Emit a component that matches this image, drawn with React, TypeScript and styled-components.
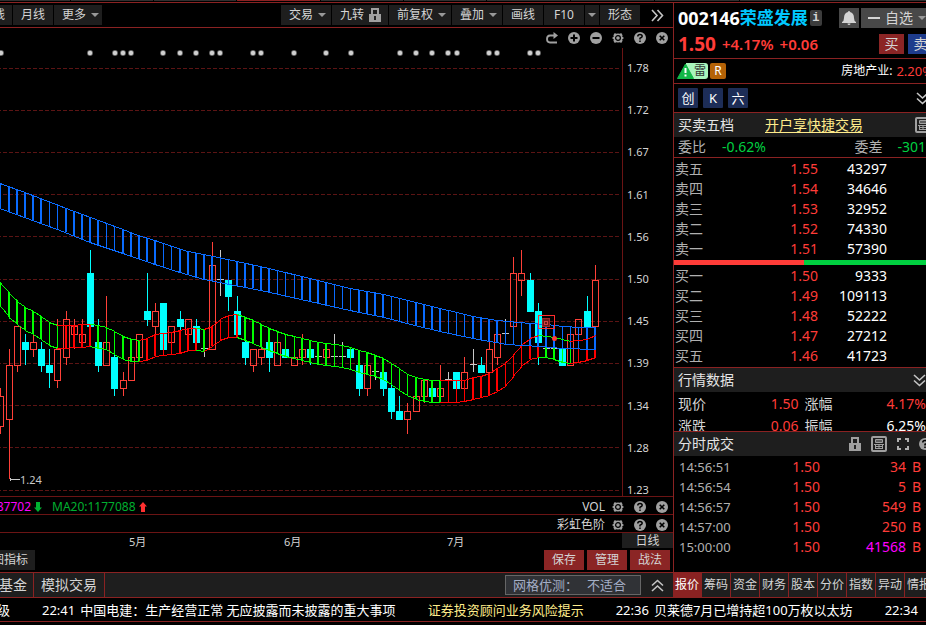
import React from 'react';
import styled, { createGlobalStyle } from 'styled-components';

const c = {
  line: '#8a2222',
  dim: '#6b1414',
  bar: '#1e1e1e',
  text: '#d4d4d4',
  soft: '#b0b0b0',
  up: '#ff3c38',
  down: '#00d040',
  magenta: '#ff00ff',
  link: '#ffec8b',
};

const GlobalStyle = createGlobalStyle`
  * { box-sizing: border-box; }
  body {
    margin: 0;
    background: #000;
    color: ${c.text};
    font-family: "Noto Sans", "Noto Sans CJK SC", sans-serif;
    font-size: 14px;
    line-height: 20px;
    overflow: hidden;
  }
  button { font: inherit; color: inherit; border: 0; padding: 0; background: none; white-space: nowrap; }
  a { color: inherit; text-decoration: none; }
  svg { display: block; flex: none; }
`;

const Page = styled.div`
  min-height: 100vh;
  display: flex;
  flex-direction: column;
  overflow: hidden;
`;

const TopStrip = styled.div`
  display: flex;
  gap: 1px;
  height: 3px;
  padding-bottom: 1px;
  overflow: hidden;
  border-bottom: 1px solid ${c.line};
`;
const StripTab = styled.div<{ $w: number; $active?: boolean }>`
  flex: 0 0 ${p => p.$w}px;
  background: ${p => (p.$active ? c.line : '#303030')};
`;

const Main = styled.div`
  display: flex;
`;
const ChartSide = styled.main`
  flex: 1;
  min-width: 0;
  display: flex;
  flex-direction: column;
`;

const Toolbar = styled.div`
  display: flex;
  gap: 1px;
  align-items: center;
  height: 25px;
  border-bottom: 1px solid ${c.line};
  font-size: 12px;
`;
const Tool = styled.button<{ $w: number; $cut?: boolean; $menu?: boolean }>`
  display: flex;
  align-items: center;
  justify-content: ${p => (p.$cut ? 'flex-end' : p.$menu ? 'flex-start' : 'center')};
  gap: 5px;
  flex: none;
  width: ${p => p.$w}px;
  height: 20px;
  padding-left: ${p => (p.$menu ? 8 : 0)}px;
  padding-right: ${p => (p.$cut ? 7 : 0)}px;
  background: ${c.bar};
  overflow: hidden;
`;
const Spacer = styled.div`
  flex: 1;
`;
const IconButton = styled.button<{ $w?: number }>`
  display: flex;
  align-items: center;
  justify-content: center;
  flex: none;
  width: ${p => p.$w ?? 22}px;
  height: 18px;
`;

const ChartTools = styled.div`
  display: flex;
  justify-content: flex-end;
  align-items: center;
  height: 20px;
`;
const PlotRow = styled.div`
  display: flex;
  border-bottom: 1px solid ${c.dim};
`;
const Plot = styled.svg`
  flex: 1;
  min-width: 0;
  height: 448px;
`;
const PriceAxis = styled.div`
  display: flex;
  flex-direction: column;
  justify-content: space-between;
  flex: 0 0 51px;
  padding: 14px 0 0 4px;
  border-left: 1px solid ${c.dim};
  font-size: 11px;
  line-height: 12px;
`;

const StudyRow = styled.div`
  display: flex;
  align-items: center;
  height: 18px;
  padding-top: 2px;
  border-bottom: 1px solid ${c.dim};
  font-size: 12px;
  line-height: 16px;
`;
const StudyName = styled.span`
  margin-right: 2px;
`;
const StudyValue = styled.span<{ $color: string; $w?: number }>`
  display: flex;
  justify-content: flex-end;
  align-items: center;
  gap: 3px;
  width: ${p => (p.$w ? p.$w + 'px' : 'auto')};
  color: ${p => p.$color};
  margin-right: 10px;
  overflow: hidden;
`;

const MonthRow = styled.div`
  display: flex;
  height: 17px;
  padding-left: 129px;
  font-size: 11px;
  line-height: 18px;
`;
const Month = styled.span<{ $w: number }>`
  flex: 0 0 ${p => p.$w}px;
`;
const Period = styled.button`
  width: 51px;
  height: 15px;
  background: ${c.bar};
  font-size: 12px;
  line-height: 15px;
`;
const ActionRow = styled.div`
  display: flex;
  gap: 3px;
  height: 22px;
  padding-right: 3px;
  font-size: 12px;
`;
const Action = styled.button`
  width: 40px;
  height: 20px;
  background: #8b2525;
`;

const Side = styled.aside`
  flex: 0 0 253px;
  border-left: 1px solid ${c.line};
  overflow: hidden;
  white-space: nowrap;
`;
const SideBody = styled.div`
  width: 260px;
`;
const SideRow = styled.div<{ $h: number; $line?: boolean; $gap?: number; $below?: number }>`
  display: flex;
  align-items: center;
  gap: ${p => p.$gap ?? 0}px;
  height: ${p => p.$h}px;
  padding: 0 1px ${p => p.$below ?? 0}px 4px;
  border-bottom: ${p => (p.$line ? `1px solid ${c.line}` : '0')};
`;
const Code = styled.span`
  color: #fff;
  font-size: 18px;
  font-weight: 700;
`;
const StockName = styled.h1`
  margin: 0;
  color: #00c8ff;
  font-size: 17px;
  font-weight: 700;
  line-height: 20px;
`;
const Info = styled.span`
  width: 12px;
  height: 16px;
  margin-left: 2px;
  background: #3c3c3c;
  border-radius: 2px;
  font: 700 12px/16px "Liberation Mono", monospace;
  text-align: center;
`;
const GreyButton = styled.button<{ $w: number }>`
  display: flex;
  align-items: center;
  justify-content: center;
  gap: 5px;
  flex: none;
  width: ${p => p.$w}px;
  height: 20px;
  margin-left: 2px;
  background: #484848;
`;
const Price = styled.strong`
  font-size: 19px;
  color: ${c.up};
`;
const Delta = styled.span`
  font-size: 15px;
  font-weight: 600;
  margin-left: 6px;
  color: ${c.up};
`;
const Trade = styled.button<{ $bg: string }>`
  width: 25px;
  height: 20px;
  margin-left: 4px;
  background: ${p => p.$bg};
`;
const Alert = styled.span`
  display: flex;
  align-items: center;
  margin-left: -1px;
  height: 16px;
  padding-right: 2px;
  border-radius: 3px;
  background: linear-gradient(90deg, transparent 0 9px, #a8f5bc 9px);
  color: #333;
  font-size: 12px;
  line-height: 16px;
`;
const Margin = styled.span`
  width: 16px;
  height: 16px;
  border-radius: 2px;
  background: #b46206;
  color: #fff;
  font-size: 12px;
  line-height: 16px;
  text-align: center;
`;
const Sector = styled.span`
  font-size: 12px;
  color: #fff;
`;
const Square = styled.button`
  width: 20px;
  height: 20px;
  background: #1d2d57;
  color: #fff;
  border-radius: 1px;
  font-size: 13px;
`;
const SectionHead = styled.div`
  display: flex;
  align-items: center;
  height: 24px;
  padding-left: 4px;
  background: ${c.bar};
  color: #e4e4e4;
`;
const QuickLink = styled.a`
  margin-left: 31px;
  color: ${c.link};
  text-decoration: underline;
  text-underline-offset: 2px;
`;
const Tinted = styled.span<{ $color: string; $size?: number; $left?: number }>`
  margin-left: ${p => p.$left ?? 0}px;
  color: ${p => p.$color};
  font-size: ${p => p.$size ?? 14}px;
`;
const DataTable = styled.table`
  table-layout: fixed;
  width: 252px;
  border-collapse: collapse;
`;
const Cell = styled.td<{ $color?: string; $h?: number; $left?: boolean }>`
  height: ${p => p.$h ?? 20}px;
  padding: 0 0 0 ${p => (p.$left ? 6 : 0)}px;
  color: ${p => p.$color ?? '#fff'};
  text-align: ${p => (p.$left ? 'left' : 'right')};
`;
const RowHead = styled.th<{ $pad: number; $color?: string; $size?: number }>`
  padding: 0 0 0 ${p => p.$pad}px;
  color: ${p => p.$color ?? c.soft};
  font-size: ${p => p.$size ?? 14}px;
  font-weight: 400;
  text-align: left;
`;
const Balance = styled.div`
  display: grid;
  grid-template-columns: 130px 1fr;
  height: 5px;
  margin: 1px 0;
`;
const Share = styled.div<{ $color: string }>`
  background: ${p => p.$color};
`;
const Book = styled.div`
  padding: 1px 0;
  border-bottom: 1px solid ${c.line};
`;
const Quotes = styled.div`
  height: 40px;
  padding-top: 1px;
  overflow: hidden;
  border-bottom: 1px solid ${c.line};
`;
const Trades = styled.div`
  padding-top: 1px;
`;

const BottomBar = styled.nav`
  display: flex;
  align-items: center;
  height: 26px;
  border: solid ${c.line};
  border-width: 1px 0;
  background: ${c.bar};
  overflow: hidden;
`;
const BottomTab = styled.button<{ $w: number; $cut?: boolean }>`
  display: flex;
  align-items: center;
  justify-content: ${p => (p.$cut ? 'flex-end' : 'center')};
  flex: none;
  width: ${p => p.$w}px;
  height: 24px;
  padding-right: ${p => (p.$cut ? 6 : 0)}px;
  border-right: 1px solid ${c.line};
  overflow: hidden;
`;
const GridTest = styled.button`
  display: flex;
  gap: 9px;
  width: 136px;
  height: 20px;
  padding-left: 7px;
  border: 1px solid #666;
  background: #303236;
  color: #a4aec6;
  font-size: 13px;
  line-height: 18px;
`;
const InfoTabs = styled.div`
  display: flex;
  flex: 0 0 253px;
  overflow: hidden;
`;
const InfoTab = styled.button<{ $active?: boolean }>`
  flex: 0 0 29px;
  height: 24px;
  border-right: 1px solid ${c.line};
  background: ${p => (p.$active ? c.line : c.bar)};
  color: ${p => (p.$active ? '#fff' : c.text)};
  font-size: 12px;
`;
const Ticker = styled.div`
  display: flex;
  align-items: center;
  gap: 32px;
  height: 24px;
  overflow: hidden;
  border-bottom: 1px solid ${c.line};
  color: #fff;
  font-size: 13px;
  white-space: nowrap;
`;
const News = styled.a<{ $color?: string; $w?: number }>`
  display: flex;
  justify-content: flex-end;
  gap: 5px;
  flex: none;
  width: ${p => (p.$w ? p.$w + 'px' : 'auto')};
  color: ${p => p.$color ?? '#fff'};
`;

const Caret = () => (
  <svg width="8" height="4"><path d="M0 0h8L4 4z" fill="#999" /></svg>
);
const Lock = () => (
  <svg width="12" height="14" viewBox="0 0 12 14">
    <path d="M3 6V1h6v5" fill="none" stroke="#a0a0a0" strokeWidth="2" />
    <path d="M0 6h12v8H0z" fill="#a0a0a0" />
    <path d="M5 8h2v4H5z" fill="#222" />
  </svg>
);
const Chevrons = ({ turn }: { turn: number }) => (
  <svg width="13" height="13" viewBox="0 0 13 13" fill="none" stroke="#c4c4c4" strokeWidth="1.600">
    <path transform={`rotate(${turn} 6.5 6.5)`} d="M1 1l5 5.500-5 5.500M6.500 1l5 5.500-5 5.500" />
  </svg>
);
const Redo = () => (
  <svg width="13" height="12" viewBox="0 0 13 12" fill="none" stroke="#a0a0a0" strokeWidth="1.800">
    <path d="M9 3.500H4Q1 3.500 1 7t3 3.500h7" /><path d="M7.500 0l4.500 3.500L7.500 7z" fill="#a0a0a0" stroke="none" />
  </svg>
);
const Round = ({ kind }: { kind: 'plus' | 'minus' | 'help' | 'close' }) => (
  <svg width="12" height="12" viewBox="0 0 12 12" fill="none" stroke="#000" strokeWidth="2">
    <circle cx="6" cy="6" r="6" fill="#a0a0a0" stroke="none" />
    {kind === 'plus' && <path d="M6 2.500v7M2.500 6h7" />}
    {kind === 'minus' && <path d="M2.500 6h7" />}
    {kind === 'close' && <path d="M3.700 3.700l4.600 4.600M8.300 3.700L3.700 8.300" strokeWidth="1.600" />}
    {kind === 'help' && <path d="M3.800 4.500q0-2 2.200-2t2.200 1.800Q8.200 5.500 6 6.200v1.300M6 8.400V10" strokeWidth="1.500" />}
  </svg>
);
const Gear = () => (
  <svg width="12" height="12" viewBox="0 0 13 12">
    <path d="M4.500 1.500L3 .5 1.500 3 2 4.500 0 6l2 1.500L1.500 9 3 11.500l1.500-1 2 .5 2-.5 1.500 1L11.500 9 11 7.500 13 6l-2-1.500.5-1.500L10 .5l-1.500 1-2-.5z" fill="#a0a0a0" />
    <circle cx="6.500" cy="6" r="2.600" fill="#a0a0a0" stroke="#000" strokeWidth="1.300" />
  </svg>
);
const Bell = () => (
  <svg width="14" height="14" viewBox="0 0 14 14" fill="#d4d4d4">
    <path d="M7 0q1 0 1 1 4 1 4 6 0 3 2 4v1H0v-1q2-1 2-4 0-5 4-6 0-1 1-1zM5.500 12.500h3q0 1.500-1.500 1.500t-1.500-1.500z" />
  </svg>
);
const Sheet = () => (
  <svg width="16" height="16" viewBox="0 0 16 16" fill="none" stroke="#a0a0a0">
    <rect x="1" y="1" width="14" height="14" rx="1" strokeWidth="2" />
    <path d="M4.500 3.500h7v3h-7zM4.500 5h7M3 8.500h10M4.500 10.500h7M4.500 12.500h7M8 8v5M4.500 8v5M11.500 8v5" />
  </svg>
);
const Expand = () => (
  <svg width="12" height="12" viewBox="0 0 12 12" fill="none" stroke="#b0b0b0" strokeWidth="2">
    <path d="M1 4V1h3M8 1h3v3M11 8v3H8M4 11H1V8" />
  </svg>
);
const Arrow = ({ up }: { up?: boolean }) => (
  <svg width="8" height="10" viewBox="0 0 8 10">
    <path d="M4 0l4 4.500H6V10H2V4.500H0z" fill={up ? '#ff3030' : '#00b030'} transform={up ? undefined : 'rotate(180 4 5)'} />
  </svg>
);
const Warning = () => (
  <svg width="17" height="16" viewBox="0 0 17 16">
    <path d="M8.500 1L16.500 15.500H.500z" fill="#12b848" stroke="#12b848" strokeLinejoin="round" />
    <path d="M8.500 5v5M8.500 11.500v2" stroke="#fff" strokeWidth="2" />
  </svg>
);

type Kind = 'u' | 'd' | 'n';
/* kind, high, body top, body bottom, low */
const candles: [Kind, number, number, number, number][] = [
  ['u', 388, 396, 427, 434], ['u', 349, 365, 420, 479], ['u', 326, 326, 366, 372], ['d', 334, 342, 350, 365],
  ['u', 334, 342, 350, 357], ['d', 342, 349, 366, 372], ['d', 349, 365, 373, 388], ['u', 319, 349, 381, 388],
  ['u', 311, 319, 358, 365], ['u', 319, 326, 335, 349], ['u', 319, 334, 343, 347], ['d', 250, 273, 327, 327],
  ['d', 319, 342, 366, 372], ['u', 296, 342, 366, 366], ['d', 349, 357, 389, 396], ['u', 372, 380, 389, 396],
  ['u', 357, 357, 381, 381], ['u', 334, 334, 358, 358], ['d', 273, 311, 320, 326], ['u', 303, 311, 327, 334],
  ['d', 303, 303, 350, 356], ['u', 326, 326, 343, 349], ['d', 311, 319, 327, 330], ['u', 319, 319, 335, 335],
  ['d', 319, 326, 343, 343], ['n', 340, 348, 349, 357], ['u', 242, 265, 350, 350], ['n', 250, 279, 280, 296],
  ['d', 265, 280, 297, 311], ['d', 296, 311, 335, 335], ['d', 327, 342, 358, 365], ['u', 349, 349, 366, 372],
  ['u', 347, 349, 358, 365], ['d', 342, 342, 358, 372], ['u', 342, 342, 366, 366], ['d', 342, 349, 358, 358],
  ['u', 349, 357, 366, 366], ['u', 334, 349, 358, 365], ['d', 349, 349, 358, 365], ['n', 356, 356, 357, 357],
  ['u', 349, 349, 358, 358], ['n', 334, 356, 357, 357], ['n', 342, 356, 357, 357], ['d', 349, 349, 358, 365],
  ['d', 365, 365, 389, 396], ['u', 365, 365, 389, 396], ['n', 371, 371, 372, 380], ['d', 372, 372, 389, 396],
  ['d', 384, 388, 412, 419], ['d', 396, 411, 420, 420], ['u', 403, 411, 420, 434], ['u', 396, 396, 412, 412],
  ['u', 380, 380, 397, 403], ['d', 388, 388, 397, 397], ['u', 365, 388, 397, 397], ['n', 372, 379, 380, 380],
  ['d', 372, 372, 389, 396], ['u', 357, 372, 389, 396], ['n', 349, 364, 365, 372], ['d', 357, 365, 373, 373],
  ['u', 342, 349, 373, 373], ['u', 334, 334, 358, 365], ['n', 319, 333, 334, 334], ['u', 257, 273, 327, 327],
  ['u', 250, 273, 281, 296], ['d', 273, 280, 312, 312], ['d', 303, 311, 343, 365], ['n', 348, 348, 349, 349],
  ['n', 348, 348, 349, 349], ['d', 349, 349, 366, 366], ['u', 334, 334, 366, 366], ['u', 319, 319, 335, 335],
  ['d', 296, 311, 327, 327], ['u', 265, 280, 327, 327],
];
const fastTop = [
  282, 293, 301, 307, 311, 316, 322, 325, 325, 325, 324, 324, 325, 327, 331, 336, 339, 340, 338, 334, 333, 332, 330, 328, 328,
  329, 326, 319, 315, 314, 317, 320, 324, 328, 331, 334, 336, 338, 340, 342, 343, 344, 345, 347, 350, 352, 355, 358, 363, 368,
  374, 377, 379, 380, 380, 380, 380, 380, 377, 376, 373, 368, 363, 355, 345, 338, 335, 336, 337, 339, 341, 340, 339, 335,
];
const fastBottom = [
  305, 317, 324, 330, 334, 339, 345, 348, 348, 347, 347, 346, 348, 349, 354, 359, 361, 361, 360, 356, 355, 354, 353, 350, 350,
  351, 346, 340, 337, 337, 340, 343, 347, 350, 353, 356, 358, 360, 362, 364, 365, 366, 367, 369, 372, 374, 376, 379, 384, 390,
  395, 399, 401, 402, 402, 402, 402, 401, 399, 397, 395, 391, 386, 376, 366, 359, 357, 357, 359, 362, 363, 362, 360, 357,
];
const slowTop: [number, number][] = [
  [0, 183], [25, 192], [69, 209], [123, 229], [138, 235], [155, 240], [172, 246], [188, 251], [204, 254], [237, 261], [269, 268],
  [310, 278], [350, 288], [384, 294], [408, 300], [440, 308], [457, 312], [473, 316], [497, 320], [530, 323], [547, 324], [563, 326], [580, 327], [596, 327],
];
const slowBottom: [number, number][] = [
  [0, 208], [60, 230], [90, 242], [123, 253], [155, 264], [180, 272], [204, 279], [240, 286], [261, 290], [310, 301], [350, 310],
  [384, 317], [415, 325], [440, 331], [473, 338], [507, 344], [540, 346], [563, 348], [596, 349],
];
const gridY = [68, 110, 152, 194, 236, 279, 321, 363, 405, 447, 490];
const eventX = [1, 90, 115, 123, 131, 163, 180, 196, 212, 220, 253, 261, 294, 326, 351, 400, 416, 432, 448, 457, 489, 497, 530, 538];

const xAt = (n: number) => Math.floor(9.1 + 8.14 * (n - 1));
const isThin = (n: number) => {
  const i = n - 1;
  return i % 7 >= 5 || (i >= 35 && i % 7 === 0);
};
const isRising = (n: number) => {
  const i = n - 1;
  return (i >= 7 && i <= 10) || (i >= 17 && i <= 23) || (i >= 25 && i <= 28) || (i >= 54 && i <= 65) || i >= 70;
};
const interp = (pts: [number, number][], x: number) => {
  const k = Math.max(1, pts.findIndex(p => p[0] >= x));
  const [x0, y0] = pts[k - 1];
  const [x1, y1] = pts[k];
  return Math.round(y0 + ((y1 - y0) * (x - x0)) / (x1 - x0));
};
const path = (pts: [number, number][]) => 'M' + pts.map(p => p.join(' ')).join('L');
const colours = { u: '#ff4038', d: '#00ffff', n: '#c8c8c8' };

const Chart = () => (
  <Plot viewBox="0 48 622 448" preserveAspectRatio="xMaxYMin slice" role="img" aria-label="日线">
    <g shapeRendering="crispEdges">
      {gridY.map(y => (
        <path key={y} d={`M-3 ${y}.5H619`} stroke="#5c1414" strokeDasharray="4 2" />
      ))}
      {candles.map(([k, hi, top, bottom, lo], n) => {
        const x = xAt(n);
        const f = colours[k];
        return (
          <g key={n} fill={f}>
            {hi < top && <rect x={x} y={hi} width="1" height={top - hi} />}
            {lo > bottom && <rect x={x} y={bottom} width="1" height={lo - bottom} />}
            {k === 'u' && <rect x={x - 2.5} y={top + 0.5} width="6" height={bottom - top - 1} fill="none" stroke={f} />}
            {k !== 'u' && <rect x={x - 3} y={top} width="7" height={bottom - top} />}
          </g>
        );
      })}
      {candles.map((_, n) => {
        const x = xAt(n);
        const w = isThin(n) ? 1 : 2;
        const left = x + 1 - w;
        const top = interp(slowTop, x);
        return (
          <g key={n}>
            <rect x={left} y={fastTop[n]} width={w} height={fastBottom[n] - fastTop[n]} fill={isRising(n) ? '#f00' : '#0f0'} />
            <rect x={left} y={top} width={w} height={interp(slowBottom, x) - top} fill="#0a6cff" />
            {n > 0 && [fastTop, fastBottom].map((s, k) => (
              <path key={k} d={`M${xAt(n - 1)} ${s[n - 1]}.5L${x + 1} ${s[n]}.5`} stroke={isRising(n) ? '#f00' : '#0f0'} />
            ))}
          </g>
        );
      })}
      <path d={path(slowTop)} fill="none" stroke="#0a6cff" transform="translate(0 .5)" />
      <path d={path(slowBottom)} fill="none" stroke="#0a6cff" transform="translate(0 .5)" />
      <rect x="538.5" y="315.5" width="16" height="13" fill="none" stroke="#ff2c2c" />
      <rect x="542" y="318" width="7" height="8" fill="#6b1818" stroke="#a02828" />
      <path d="M544 321h3v3h-3z" fill="none" stroke="#d04040" />
      <path d="M10 479.500h10M10.500 478v3" stroke="#c8c8c8" />
    </g>
    <circle cx="554.5" cy="338.5" r="2.500" fill="#ff3c38" />
    {eventX.map(x => (
      <g key={x} fill="#d0d0d0">
        <circle cx={x} cy="53" r="3" opacity=".45" />
        <circle cx={x} cy="53" r="2.200" />
      </g>
    ))}
    <text x="20" y="484" fontSize="11" fill="#c8c8c8">1.24</text>
  </Plot>
);

const StudyIcons = () => (
  <>
    <IconButton aria-label="设置"><Gear /></IconButton>
    <IconButton aria-label="帮助"><Round kind="help" /></IconButton>
    <IconButton aria-label="关闭"><Round kind="close" /></IconButton>
  </>
);

const sells = [['卖五', '1.55', '43297'], ['卖四', '1.54', '34646'], ['卖三', '1.53', '32952'], ['卖二', '1.52', '74330'], ['卖一', '1.51', '57390']];
const buys = [['买一', '1.50', '9333'], ['买二', '1.49', '109113'], ['买三', '1.48', '52222'], ['买四', '1.47', '27212'], ['买五', '1.46', '41723']];
const trades = [['14:56:51', '34'], ['14:56:54', '5'], ['14:56:57', '549'], ['14:57:00', '250'], ['15:00:00', '41568']];

const Levels = ({ rows }: { rows: string[][] }) => (
  <DataTable>
    <colgroup><col width="60" /><col width="84" /><col width="69" /><col /></colgroup>
    <tbody>
      {rows.map(([name, price, volume]) => (
        <tr key={name}>
          <RowHead scope="row" $pad={1}>{name}</RowHead>
          <Cell $color={c.up}>{price}</Cell>
          <Cell>{volume}</Cell>
          <Cell />
        </tr>
      ))}
    </tbody>
  </DataTable>
);

export default function App() {
  return (
    <Page>
      <GlobalStyle />
      <TopStrip>
        {[70, 82, 82, 83, 82, 82, 83, 83, 84, 200].map((w, i) => <StripTab key={i} $w={w} $active={i === 3} />)}
      </TopStrip>
      <Main>
        <ChartSide>
          <Toolbar>
            <Tool $w={12} $cut>周线</Tool>
            <Tool $w={40}>月线</Tool>
            <Tool $w={48} $menu>更多<Caret /></Tool>
            <Spacer />
            <Tool $w={50} $menu>交易<Caret /></Tool>
            <Tool $w={56} $menu>九转<Lock /></Tool>
            <Tool $w={62} $menu>前复权<Caret /></Tool>
            <Tool $w={50} $menu>叠加<Caret /></Tool>
            <Tool $w={40}>画线</Tool>
            <Tool $w={40}>F10</Tool>
            <Tool $w={14} aria-label="F10 菜单"><Caret /></Tool>
            <Tool $w={40}>形态</Tool>
            <IconButton $w={32} aria-label="展开"><Chevrons turn={0} /></IconButton>
          </Toolbar>
          <ChartTools>
            <IconButton aria-label="恢复"><Redo /></IconButton>
            <IconButton aria-label="放大"><Round kind="plus" /></IconButton>
            <IconButton aria-label="缩小"><Round kind="minus" /></IconButton>
            <StudyIcons />
          </ChartTools>
          <PlotRow>
            <Chart />
            <PriceAxis>
              {['1.78', '1.72', '1.67', '1.61', '1.56', '1.50', '1.45', '1.39', '1.34', '1.28', '1.23'].map(p => <span key={p}>{p}</span>)}
            </PriceAxis>
          </PlotRow>
          <StudyRow>
            <StudyValue $color={c.magenta} $w={42}>87702<Arrow /></StudyValue>
            <StudyValue $color="#00b030">MA20:1177088<Arrow up /></StudyValue>
            <Spacer />
            <StudyName>VOL</StudyName>
            <StudyIcons />
          </StudyRow>
          <StudyRow>
            <Spacer />
            <StudyName>彩虹色阶</StudyName>
            <StudyIcons />
          </StudyRow>
          <MonthRow>
            <Month $w={155}>5月</Month>
            <Month $w={163}>6月</Month>
            <Month $w={60}>7月</Month>
            <Spacer />
            <Period>日线</Period>
          </MonthRow>
          <ActionRow>
            <Tool $w={35} $cut>主图指标</Tool>
            <Spacer />
            <Action>保存</Action>
            <Action>管理</Action>
            <Action>战法</Action>
          </ActionRow>
        </ChartSide>

        <Side>
          <SideBody>
            <SideRow $h={30}>
              <Code>002146</Code>
              <StockName>荣盛发展</StockName>
              <Info>i</Info>
              <Spacer />
              <GreyButton $w={20} aria-label="提醒"><Bell /></GreyButton>
              <GreyButton $w={72}>
                <svg width="12" height="2"><path d="M0 1h12" stroke="#d4d4d4" strokeWidth="2" /></svg>
                自选
                <Caret />
              </GreyButton>
            </SideRow>
            <SideRow $h={26} $line $below={4}>
              <Price>1.50</Price>
              <Delta>+4.17%</Delta>
              <Delta>+0.06</Delta>
              <Spacer />
              <Trade $bg="#8b2525">买</Trade>
              <Trade $bg="#1e3c8c">卖</Trade>
            </SideRow>
            <SideRow $h={25} $line $gap={2}>
              <Alert><Warning />雷</Alert>
              <Margin>R</Margin>
              <Spacer />
              <Sector>房地产业:</Sector>
              <Tinted $color={c.up} $size={13} $left={2}>2.20%</Tinted>
            </SideRow>
            <SideRow $h={29} $line $gap={5}>
              <Square>创</Square>
              <Square>K</Square>
              <Square>六</Square>
              <Spacer />
              <IconButton aria-label="展开"><Chevrons turn={90} /></IconButton>
            </SideRow>
            <SectionHead>
              买卖五档
              <QuickLink href="#trade">开户享快捷交易</QuickLink>
              <Spacer />
              <IconButton $w={22} aria-label="明细"><Sheet /></IconButton>
            </SectionHead>
            <SideRow $h={21} $line>
              <Tinted $color={c.soft}>委比</Tinted>
              <Tinted $color={c.down} $left={16}>-0.62%</Tinted>
              <Spacer />
              <Tinted $color={c.soft}>委差</Tinted>
              <Tinted $color={c.down} $left={15}>-301</Tinted>
              <Tinted $color={c.down} $left={7} />
            </SideRow>
            <Book>
              <Levels rows={sells} />
              <Balance><Share $color={c.up} /><Share $color={c.down} /></Balance>
              <Levels rows={buys} />
            </Book>
            <SectionHead>
              行情数据
              <Spacer />
              <IconButton $w={30} aria-label="展开"><Chevrons turn={90} /></IconButton>
            </SectionHead>
            <Quotes>
              <DataTable>
                <colgroup><col width="50" /><col width="74" /><col width="60" /><col width="67" /></colgroup>
                <tbody>
                  {[['现价', '1.50', '涨幅', '4.17%', c.up], ['涨跌', '0.06', '振幅', '6.25%', '#fff']].map(r => (
                    <tr key={r[0]}>
                      <RowHead scope="row" $pad={4} $color={c.text}>{r[0]}</RowHead>
                      <Cell $color={c.up} $h={22}>{r[1]}</Cell>
                      <RowHead scope="row" $pad={6} $color={c.text}>{r[2]}</RowHead>
                      <Cell $color={r[4]}>{r[3]}</Cell>
                    </tr>
                  ))}
                </tbody>
              </DataTable>
            </Quotes>
            <SectionHead>
              分时成交
              <Spacer />
              <IconButton $w={24} aria-label="锁定"><Lock /></IconButton>
              <IconButton $w={24} aria-label="明细"><Sheet /></IconButton>
              <IconButton $w={24} aria-label="放大"><Expand /></IconButton>
              <IconButton $w={19} aria-label="帮助"><Round kind="help" /></IconButton>
            </SectionHead>
            <Trades>
              <DataTable>
                <colgroup><col width="100" /><col width="46" /><col width="86" /><col width="20" /></colgroup>
                <tbody>
                  {trades.map(([time, volume]) => (
                    <tr key={time}>
                      <RowHead scope="row" $pad={5} $size={13}>{time}</RowHead>
                      <Cell $color={c.up}>1.50</Cell>
                      <Cell $color={volume === '41568' ? c.magenta : c.up}>{volume}</Cell>
                      <Cell $color={c.up} $left>B</Cell>
                    </tr>
                  ))}
                </tbody>
              </DataTable>
            </Trades>
          </SideBody>
        </Side>
      </Main>

      <BottomBar>
        <BottomTab $w={34} $cut>基金</BottomTab>
        <BottomTab $w={71}>模拟交易</BottomTab>
        <Spacer />
        <GridTest><span>网格优测：</span><span>不适合</span></GridTest>
        <IconButton $w={32} aria-label="收起"><Chevrons turn={-90} /></IconButton>
        <InfoTabs>
          {['报价', '筹码', '资金', '财务', '股本', '分价', '指数', '异动', '情报'].map((t, i) => <InfoTab key={t} $active={i === 0}>{t}</InfoTab>)}
        </InfoTabs>
      </BottomBar>
      <Ticker>
        <News href="#n0" $w={10}>级</News>
        <News href="#n1"><span>22:41</span><span>中国电建：生产经营正常 无应披露而未披露的重大事项</span></News>
        <News href="#risk" $color={c.link}>证券投资顾问业务风险提示</News>
        <News href="#n2"><span>22:36</span><span>贝莱德7月已增持超100万枚以太坊</span></News>
        <News href="#n3">22:34</News>
      </Ticker>
    </Page>
  );
}
